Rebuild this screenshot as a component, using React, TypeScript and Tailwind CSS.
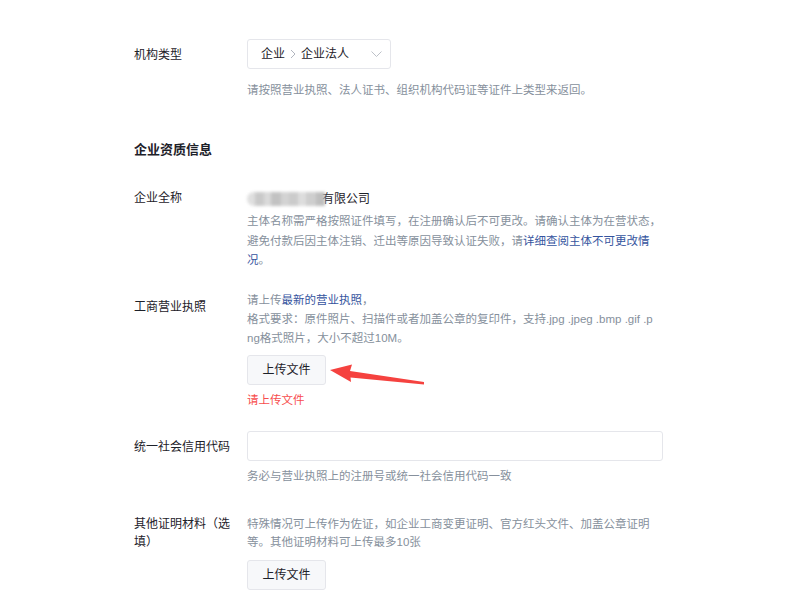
const font = "font-['Liberation_Sans','Noto_Sans_CJK_SC',sans-serif]";

function Label({ children, className = "" }: { children: React.ReactNode; className?: string }) {
  return <div className={`w-[100px] mr-[13px] shrink-0 text-[12px] text-[#1d2129] ${className}`}>{children}</div>;
}

function UploadButton() {
  return (
    <button className="w-[79px] h-[30px] rounded-[3px] border border-[#e5e6eb] bg-[#f7f8fa] text-[12px] text-[#1d2129] flex items-center justify-center">
      上传文件
    </button>
  );
}

function BlurredName() {
  return (
    <div className="w-[78px] h-[15px] flex items-center blur-[1.5px] opacity-90">
      <span className="w-[8px] h-[14px] bg-[#dcdcdc] rounded-l-full" />
      <span className="w-[9px] h-[14px] bg-[#c4c4c4]" />
      <span className="w-[7px] h-[14px] bg-[#d6d6d6]" />
      <span className="w-[10px] h-[14px] bg-[#bcbcbc]" />
      <span className="w-[8px] h-[14px] bg-[#cfcfcf]" />
      <span className="w-[9px] h-[14px] bg-[#c6c6c6]" />
      <span className="w-[8px] h-[14px] bg-[#dadada]" />
      <span className="w-[10px] h-[14px] bg-[#c9c9c9]" />
      <span className="w-[9px] h-[14px] bg-[#b8b8b8]" />
    </div>
  );
}

export default function App() {
  return (
    <div className={`relative w-[800px] h-[615px] overflow-hidden bg-white pl-[134px] pt-[38px] ${font}`}>
      {/* 机构类型 */}
      <div className="flex items-center">
        <Label className="leading-[30px] pt-[2px]">机构类型</Label>
        <div className="w-[144px] h-[30px] rounded-[3px] border border-[#e5e6eb] flex items-center pl-[13px] pr-[8px] text-[12px] text-[#1d2129]">
          <span>企业</span>
          <svg viewBox="0 0 6 10" className="w-[6px] h-[10px] mx-[5px]" fill="none">
            <path d="M1 1l4 4-4 4" stroke="#a9aeb8" strokeWidth="0.9" />
          </svg>
          <span>企业法人</span>
          <svg viewBox="0 0 11 6" className="ml-auto w-[11px] h-[6px]" fill="none">
            <path d="M0.5 0.5l5 5 5-5" stroke="#b5bac2" strokeWidth="0.9" />
          </svg>
        </div>
      </div>
      <p className="ml-[113px] mt-[10px] text-[11.5px] leading-[20px] text-[#86909c]">
        请按照营业执照、法人证书、组织机构代码证等证件上类型来返回。
      </p>

      {/* 企业资质信息 */}
      <h2 className="mt-[40px] text-[13px] leading-[20px] font-semibold text-[#1d2129]">企业资质信息</h2>

      {/* 企业全称 */}
      <div className="flex mt-[29px]">
        <Label className="leading-[19px]">企业全称</Label>
        <div className="w-[416px]">
          <div className="flex items-center h-[19px] text-[12px] text-[#1d2129]">
            <BlurredName />
            <span className="-ml-[3px]">有限公司</span>
          </div>
          <p className="mt-[4px] text-[11.5px] leading-[19.5px] text-[#86909c]">
            主体名称需严格按照证件填写，在注册确认后不可更改。请确认主体为在营状态，避免付款后因主体注销、迁出等原因导致认证失败，请<span className="text-[#35549e]">详细查阅主体不可更改情</span><span className="text-[#35549e]">况</span>。
          </p>
        </div>
      </div>

      {/* 工商营业执照 */}
      <div className="flex mt-[20px]">
        <Label className="leading-[19px] pt-[7px]">工商营业执照</Label>
        <div className="w-[416px]">
          <p className="w-[408px] text-[11.5px] leading-[19px] text-[#86909c] break-all">
            请上传<span className="text-[#35549e]">最新的营业执照</span>，
            <br />
            格式要求：原件照片、扫描件或者加盖公章的复印件，支持.jpg .jpeg .bmp .gif .png格式照片，大小不超过10M。
          </p>
          <div className="mt-[7.5px]">
            <UploadButton />
          </div>
          <p className="mt-[5px] text-[11.5px] leading-[20px] text-[#f74d4d]">请上传文件</p>
        </div>
      </div>

      {/* 统一社会信用代码 */}
      <div className="flex mt-[21px]">
        <Label className="leading-[30px] pt-[1px]">统一社会信用代码</Label>
        <div className="w-[416px]">
          <input className="block w-[416px] h-[30px] rounded-[3px] border border-[#e5e6eb] outline-none px-[12px] text-[12px]" />
          <p className="mt-[5px] text-[11.5px] leading-[20px] text-[#86909c]">务必与营业执照上的注册号或统一社会信用代码一致</p>
        </div>
      </div>

      {/* 其他证明材料 */}
      <div className="flex mt-[29px]">
        <Label className="leading-[18px]">其他证明材料（选填）</Label>
        <div className="w-[416px]">
          <p className="text-[11.5px] leading-[18px] text-[#86909c]">
            特殊情况可上传作为佐证，如企业工商变更证明、官方红头文件、加盖公章证明等。其他证明材料可上传最多10张
          </p>
          <div className="mt-[9px]">
            <UploadButton />
          </div>
        </div>
      </div>

      {/* annotation arrow */}
      <svg className="absolute left-0 top-0 w-[800px] h-[615px] pointer-events-none" viewBox="0 0 800 615">
        <polygon points="330,370 352,364.5 350,371 424,382 424,384.5 350.5,377.5 351,382" fill="#f5423f" />
      </svg>
    </div>
  );
}
